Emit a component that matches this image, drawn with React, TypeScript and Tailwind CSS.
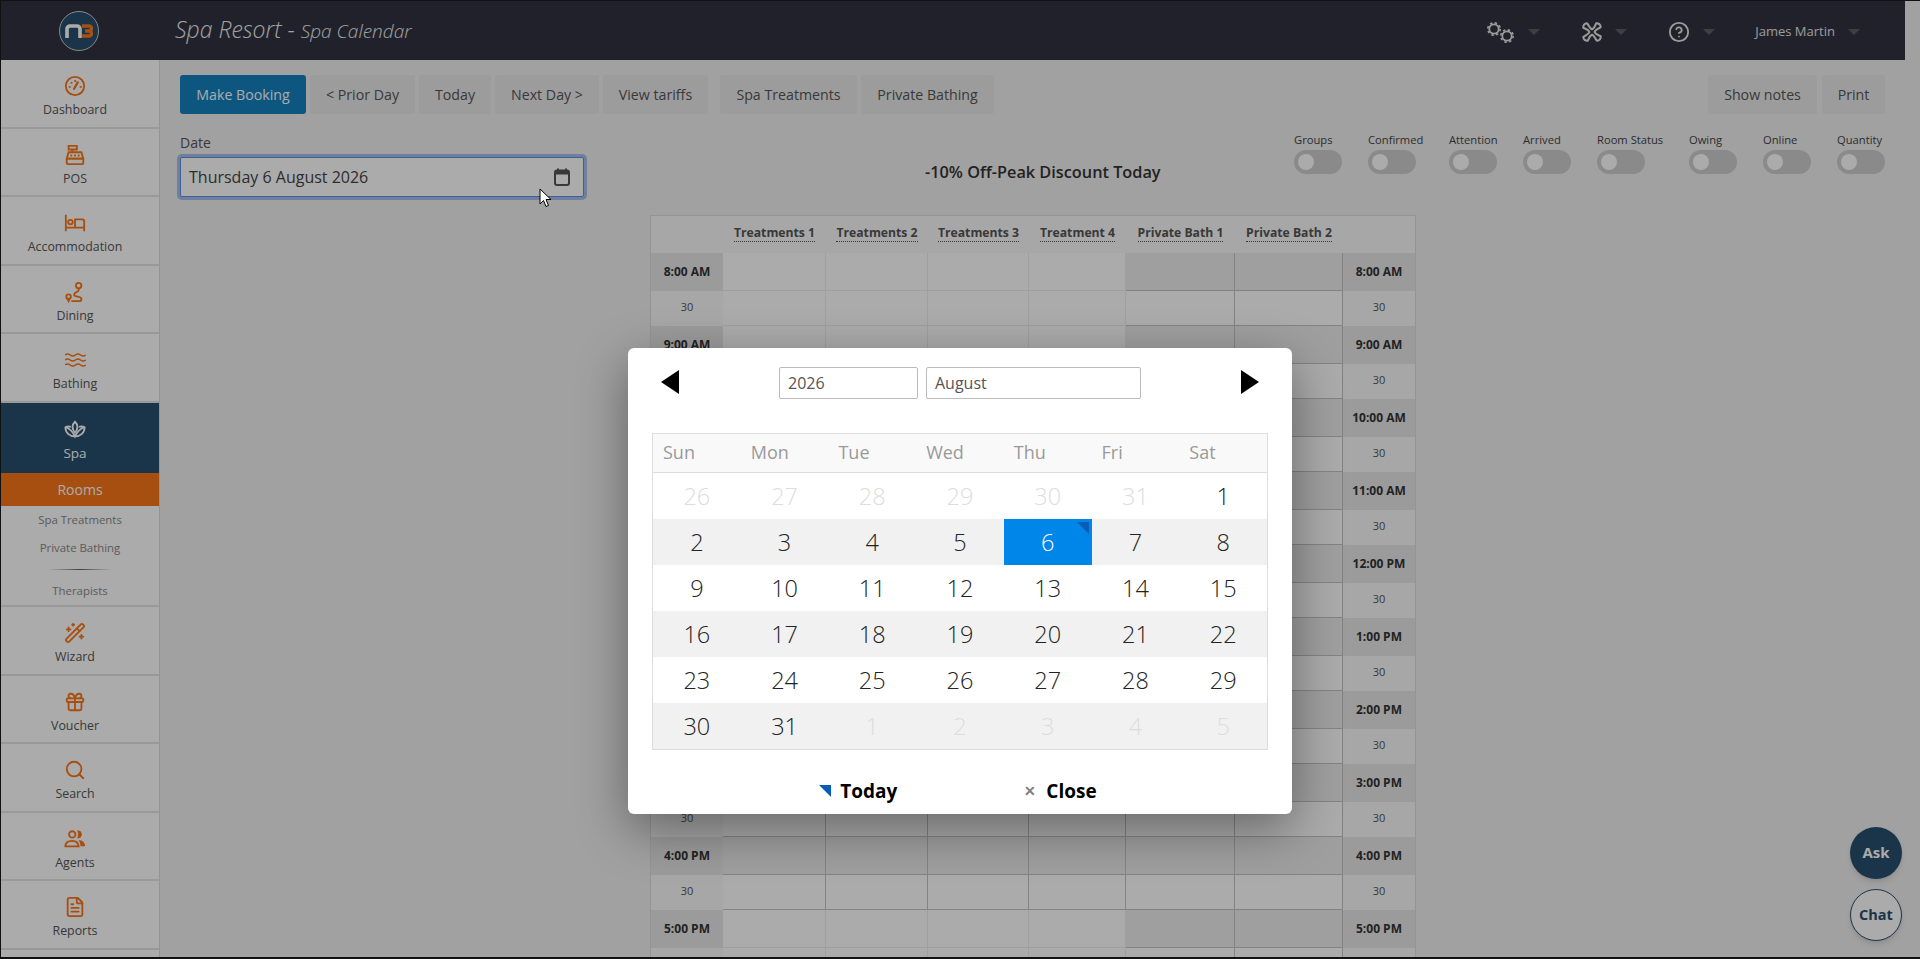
import React from 'react'
import { WandSparkles, Gift, Search, FileText, CircleHelp } from 'lucide-react'

const iconCls = 'w-[22px] h-[22px] text-[#f87718]'

const GaugeIcon = () => (
  <svg viewBox="0 0 24 24" fill="none" stroke="currentColor" strokeWidth="2" strokeLinecap="round" className={iconCls}>
    <circle cx="12" cy="12" r="10" />
    <path d="M11 15l4-7" strokeWidth="2.500" />
    <path d="M6 13h.5M8 8.500h.5M12 6.500h.5M18 13h.5" />
  </svg>
)

const RegisterIcon = () => (
  <svg viewBox="0 0 24 24" fill="none" stroke="currentColor" strokeWidth="2" className={iconCls}>
    <path d="M5 2h9v4H5zM9 6v3" />
    <path d="M5 9h14l2 7H3z" />
    <rect x="3" y="16" width="18" height="6" rx="1" />
    <path d="M7 12.500h2M11 12.500h2M15 12.500h2" />
  </svg>
)

const BedIcon = () => (
  <svg viewBox="0 0 24 24" fill="none" stroke="currentColor" strokeWidth="2" className="w-[24px] h-[22px] text-[#f87718]">
    <path d="M2 3v18M2 17h20M22 21V10a2 2 0 0 0-2-2h-8v9" />
    <circle cx="7" cy="11" r="2.500" />
  </svg>
)

const DiningIcon = () => (
  <svg viewBox="0 0 24 24" fill="none" stroke="currentColor" strokeWidth="2" className={iconCls}>
    <circle cx="16" cy="5" r="3" />
    <path d="M16 8v2c0 2-5 2-5 5 0 3 8 1 8 4.500 0 1.500-1 2.500-2.500 2.500H8" />
    <circle cx="5" cy="17" r="2.500" />
    <path d="M3.500 19l1.500 3 1.500-3" />
  </svg>
)

const WavesIcon = () => (
  <svg viewBox="0 0 21 14" fill="none" stroke="currentColor" strokeWidth="1.500" className="w-[21px] h-[14px] my-[4px] text-[#f87718]">
    <path d="M0 2q2.600-2 5.200 0t5.200 0 5.200 0 5.200 0" />
    <path d="M0 7q2.600-2 5.200 0t5.200 0 5.200 0 5.200 0" />
    <path d="M0 12q2.600-2 5.200 0t5.200 0 5.200 0 5.200 0" />
  </svg>
)

const LotusIcon = () => (
  <svg viewBox="0 0 24 24" fill="none" stroke="currentColor" strokeWidth="2" className="w-[22px] h-[22px] text-white">
    <path d="M12 3c-3 3-4 7 0 12 4-5 3-9 0-12z" />
    <path d="M7.500 8.500C5.500 8 3.500 8 1.500 9c0 6 4.500 10 10.500 10s10.500-4 10.500-10c-2-1-4-1-6-.5" />
    <path d="M2 9c3 1 7 4 10 10 3-6 7-9 10-10" />
  </svg>
)

const AgentsIcon = () => (
  <svg viewBox="0 0 24 24" className={iconCls}>
    <g fill="none" stroke="currentColor" strokeWidth="2">
      <circle cx="9" cy="7" r="3.500" />
      <path d="M1.500 20c0-4 3-6 7.500-6s6.500 2 7 6z" />
    </g>
    <path d="M15 3a4 4 0 0 1 0 8c1-2 1-6 0-8z" fill="currentColor" stroke="currentColor" />
    <path d="M16 13c4 0 7 3 7 7h-5c0-3-1-5-2-7z" fill="currentColor" />
  </svg>
)

const GearsIcon = () => (
  <svg viewBox="0 0 30 24" fill="none" stroke="currentColor" className="w-[30px] h-[24px] text-[#e8e8e8]">
    <circle cx="8" cy="9" r="4.700" strokeWidth="1.800" />
    <circle cx="8" cy="9" r="6.200" strokeWidth="1.600" strokeDasharray="2.400 2.470" />
    <circle cx="21" cy="16" r="4.700" strokeWidth="1.800" />
    <circle cx="21" cy="16" r="6.200" strokeWidth="1.600" strokeDasharray="2.400 2.470" />
  </svg>
)

const PinwheelIcon = () => (
  <svg viewBox="0 0 24 24" fill="none" stroke="currentColor" strokeWidth="2.200" strokeLinejoin="round" className="w-[22px] h-[22px] text-[#e8e8e8]">
    {[0, 90, 180, 270].map((deg) => (
      <path key={deg} transform={`rotate(${deg} 12 12)`} d="M12 9.500C9 7.500 8.500 4.500 6.500 2.500 4 2.500 2 5 2.500 7.500 5 8.500 7.500 9 9.500 12" />
    ))}
  </svg>
)

const Caret = () => (
  <span className="w-0 h-0 border-l-[6px] border-r-[6px] border-t-[6px] border-l-transparent border-r-transparent border-t-[#5a6060]"></span>
)

type NavItem = { label: string; icon: React.ReactElement }

const navTop: NavItem[] = [
  { label: 'Dashboard', icon: <GaugeIcon /> },
  { label: 'POS', icon: <RegisterIcon /> },
  { label: 'Accommodation', icon: <BedIcon /> },
  { label: 'Dining', icon: <DiningIcon /> },
  { label: 'Bathing', icon: <WavesIcon /> },
]

const navBottom: NavItem[] = [
  { label: 'Wizard', icon: <WandSparkles className={iconCls} strokeWidth={2} /> },
  { label: 'Voucher', icon: <Gift className={iconCls} strokeWidth={2} /> },
  { label: 'Search', icon: <Search className={iconCls} strokeWidth={2} /> },
  { label: 'Agents', icon: <AgentsIcon /> },
  { label: 'Reports', icon: <FileText className={iconCls} strokeWidth={2} /> },
]

const NavLink = ({ item }: { item: NavItem }) => (
  <div className="h-[68.600px] shrink-0 flex flex-col items-center pt-[15px] pr-[10px] gap-[4px] border-b-2 border-[#e5e5e5] text-[12.400px] leading-[18px] text-[#555]">
    {item.icon}
    <span>{item.label}</span>
  </div>
)

const toolbarLeft = [
  { label: '< Prior Day', cls: 'w-[105px] ml-[4px]' },
  { label: 'Today', cls: 'w-[72px] ml-[4px]' },
  { label: 'Next Day >', cls: 'w-[104px] ml-[4px]' },
  { label: 'View tariffs', cls: 'w-[105px] ml-[4px]' },
  { label: 'Spa Treatments', cls: 'w-[137px] ml-[12px]' },
  { label: 'Private Bathing', cls: 'w-[133px] ml-[4px]' },
]

const toggles = [
  { label: 'Groups', cls: 'w-[48px]' },
  { label: 'Confirmed', cls: 'w-[55px]' },
  { label: 'Attention', cls: 'w-[48px]' },
  { label: 'Arrived', cls: 'w-[48px]' },
  { label: 'Room Status', cls: 'w-[66px]' },
  { label: 'Owing', cls: 'w-[48px]' },
  { label: 'Online', cls: 'w-[48px]' },
  { label: 'Quantity', cls: 'w-[48px]' },
]

const columns = ['Treatments 1', 'Treatments 2', 'Treatments 3', 'Treatment 4', 'Private Bath 1', 'Private Bath 2']

const hours = ['8:00 AM', '9:00 AM', '10:00 AM', '11:00 AM', '12:00 PM', '1:00 PM', '2:00 PM', '3:00 PM', '4:00 PM', '5:00 PM']

const weekNames = ['Sun', 'Mon', 'Tue', 'Wed', 'Thu', 'Fri', 'Sat']

const weeks: [number, boolean][][] = [
  [[26, true], [27, true], [28, true], [29, true], [30, true], [31, true], [1, false]],
  [[2, false], [3, false], [4, false], [5, false], [6, false], [7, false], [8, false]],
  [[9, false], [10, false], [11, false], [12, false], [13, false], [14, false], [15, false]],
  [[16, false], [17, false], [18, false], [19, false], [20, false], [21, false], [22, false]],
  [[23, false], [24, false], [25, false], [26, false], [27, false], [28, false], [29, false]],
  [[30, false], [31, false], [1, true], [2, true], [3, true], [4, true], [5, true]],
]

const rowGrid = 'grid grid-cols-[72px_103px_102px_101px_97px_109px_108px_72px]'

function ScheduleRow({ hour, index }: { hour: string; index: number }) {
  // treatments columns are only "closed looking" from 3:30 to 4:30
  const closed = index === 8
  const halfClosed = index === 7 || index === 8
  const half = index < 9 ? '30' : ''
  return (
    <>
      <div className={`${rowGrid} h-[38px]`}>
        <div className="flex items-center justify-center bg-[#e8e8e8] text-[12px] font-bold text-[#333]">{hour}</div>
        {columns.map((c, i) => (
          <div
            key={c}
            className={i > 3 || closed
              ? 'bg-[#eeeeee] border-r border-b border-[#c4c4c4]'
              : 'bg-white border-r border-b border-[#eeeeee]'}
          ></div>
        ))}
        <div className="flex items-center justify-center bg-[#e8e8e8] text-[12px] font-bold text-[#333]">{hour}</div>
      </div>
      <div className={`${rowGrid} h-[35px]`}>
        <div className="flex items-center justify-center pb-[2px] text-[11px] text-[#555]">{half}</div>
        {columns.map((c, i) => (
          <div
            key={c}
            className={i > 3 || halfClosed
              ? 'bg-white border-r border-b border-[#c4c4c4]'
              : 'bg-white border-r border-b border-[#eeeeee]'}
          ></div>
        ))}
        <div className="flex items-center justify-center pb-[2px] text-[11px] text-[#555]">{half}</div>
      </div>
    </>
  )
}

export default function App() {
  return (
    <div className="relative w-[1920px] h-[959px] overflow-hidden bg-[#f0f0f0] border-l border-t border-b-2 border-[#111] font-['Open_Sans',sans-serif]">
      {/* Page under the dim */}
      <div className="flex flex-col h-full pr-[15px]">
        <header className="h-[59px] shrink-0 bg-[#30323f] flex items-center text-[#e6e6e6]">
          <div className="w-[155px] flex justify-center">
            <div className="w-[40px] h-[40px] rounded-full bg-[#284f6d] border border-[#cccccc] flex items-center justify-center">
              <svg viewBox="0 0 28 14" className="w-[28px] h-[14px]" fill="none" strokeWidth="3.600">
                <path d="M2 14V5a3 3 0 0 1 3-3h7a3 3 0 0 1 3 3v9" stroke="#ffffff" />
                <path d="M17 2h7a2.250 2.250 0 0 1 0 5h-4 4a2.500 2.500 0 0 1 0 5h-7" stroke="#f87718" />
              </svg>
            </div>
          </div>
          <div className="ml-[19px] -mt-[2px] italic font-light text-[#f2f2f2] whitespace-nowrap">
            <span className="text-[23px]">Spa Resort - </span>
            <span className="text-[19px]">Spa Calendar</span>
          </div>
          <div className="ml-auto mt-[3px] flex items-center mr-[45px]">
            <GearsIcon />
            <span className="ml-[12px] mr-[41px] flex"><Caret /></span>
            <PinwheelIcon />
            <span className="ml-[12px] mr-[41px] flex"><Caret /></span>
            <CircleHelp className="w-[22px] h-[22px] text-[#e8e8e8]" />
            <span className="ml-[13px] mr-[40px] flex"><Caret /></span>
            <span className="text-[13px] text-[#e6e6e6]">James Martin</span>
            <span className="ml-[13px] flex"><Caret /></span>
          </div>
        </header>

        <div className="flex flex-1 min-h-0">
          <aside className="w-[159px] shrink-0 bg-white border-r border-[#dddddd] flex flex-col overflow-hidden">
            {navTop.map((item) => <NavLink key={item.label} item={item} />)}
            <div className="h-[70px] shrink-0 bg-[#284f6d] flex flex-col items-center pt-[16px] pr-[10px] gap-[3px] text-[13.500px] leading-[18px] text-white">
              <LotusIcon />
              <span>Spa</span>
            </div>
            <div className="h-[33px] shrink-0 bg-[#f87718] flex items-center justify-center text-[14px] text-white">Rooms</div>
            <div className="h-[101px] shrink-0 flex flex-col items-center border-b-2 border-[#e5e5e5] text-[11.400px] text-[#888]">
              <span className="leading-[28px]">Spa Treatments</span>
              <span className="leading-[28px]">Private Bathing</span>
              <span className="w-[64px] h-px shrink-0 my-[7px] bg-gradient-to-r from-transparent via-[#666] to-transparent"></span>
              <span className="leading-[28px]">Therapists</span>
            </div>
            {navBottom.map((item) => <NavLink key={item.label} item={item} />)}
          </aside>

          <main className="flex-1 min-w-0 px-[20px] pt-[15px]">
            <div className="flex text-[14.200px] text-[#555] h-[39px]">
              <div className="flex">
                <button className="w-[126px] rounded-[3px] bg-[#1480bf] text-white">Make Booking</button>
                {toolbarLeft.map((b) => (
                  <button key={b.label} className={`${b.cls} rounded-[3px] bg-[#e9e9e9]`}>{b.label}</button>
                ))}
              </div>
              <div className="ml-auto flex">
                <button className="w-[109px] rounded-[3px] bg-[#e9e9e9]">Show notes</button>
                <button className="w-[63px] ml-[5px] rounded-[3px] bg-[#e9e9e9]">Print</button>
              </div>
            </div>

            <div className="flex mt-[19px]">
              <div className="w-[404px]">
                <div className="text-[14px] leading-[20px] text-[#555]">Date</div>
                <div className="mt-[4px] h-[40px] flex items-center justify-between px-[8px] bg-white border border-[#5b8fe8] rounded-[2px] shadow-[0_0_0_3px_rgba(110,150,225,0.55)]">
                  <span className="text-[16px] text-[#444]">Thursday 6 August 2026</span>
                  <svg viewBox="0 0 16 18" className="w-[16px] h-[18px] mr-[5px]">
                    <path d="M4 0.500v3M12 0.500v3" stroke="#555" strokeWidth="2" />
                    <rect x="1" y="2.500" width="14" height="14.500" rx="2" fill="none" stroke="#555" strokeWidth="2" />
                    <rect x="1" y="2.500" width="14" height="4" fill="#555" />
                  </svg>
                </div>
              </div>
              <div className="ml-[341px] mt-[28px] text-[16.300px] leading-[22px] font-semibold text-[#333] whitespace-nowrap">-10% Off-Peak Discount Today</div>
              <div className="ml-auto flex gap-[26px] -mt-[1px]">
                {toggles.map((t) => (
                  <div key={t.label} className={`flex flex-col ${t.cls}`}>
                    <span className="text-[11.200px] leading-[16px] text-[#444] mb-[2px] whitespace-nowrap">{t.label}</span>
                    <span className="w-[48px] h-[24px] rounded-full bg-[#cecece] flex items-center pl-[4px]">
                      <span className="w-[16px] h-[16px] rounded-full bg-white"></span>
                    </span>
                  </div>
                ))}
              </div>
            </div>

            <div className="ml-[470px] mt-[18px] w-[766px] border border-[#dddddd] bg-[#f9f9f9]">
              <div className={`${rowGrid} h-[37px] items-center`}>
                <div></div>
                {columns.map((c) => (
                  <div key={c} className="flex justify-center pb-[3px]">
                    <span className="text-[12.200px] leading-[16px] font-bold text-[#555] border-b border-dotted border-[#555]">{c}</span>
                  </div>
                ))}
                <div></div>
              </div>
              {hours.map((h, i) => <ScheduleRow key={h} hour={h} index={i} />)}
            </div>
          </main>
        </div>
      </div>

      <div className="absolute left-[1849px] top-[826px] w-[52px] h-[52px] rounded-full bg-[#284f6d] flex items-center justify-center pb-[2px] text-[15px] font-bold text-white shadow-md">Ask</div>
      <div className="absolute left-[1849px] top-[888px] w-[52px] h-[52px] rounded-full bg-white border border-[#284f6d] flex items-center justify-center text-[14.500px] font-bold text-[#284f6d] shadow-md">Chat</div>

      {/* Dim */}
      <div className="absolute inset-0 bg-black/33"></div>

      {/* Date picker */}
      <div className="absolute left-[627px] top-[347px] w-[664px] h-[466px] rounded-[6px] bg-white shadow-[0_15px_50px_rgba(0,0,0,0.4)] px-[24px] pt-[19px]">
        <div className="h-[32px] flex items-center justify-between px-[9px]">
          <svg viewBox="0 0 18 24" className="w-[18px] h-[24px] -mt-[2px]"><polygon points="18,0 18,24 0,12" fill="#000" /></svg>
          <div className="flex gap-[8px] text-[16px] text-[#555]">
            <div className="w-[139px] h-[32px] flex items-center px-[8px] border border-[#bbbbbb] rounded-[2px]">2026</div>
            <div className="w-[215px] h-[32px] flex items-center px-[8px] border border-[#bbbbbb] rounded-[2px]">August</div>
          </div>
          <svg viewBox="0 0 18 24" className="w-[18px] h-[24px] -mt-[2px]"><polygon points="0,0 18,12 0,24" fill="#000" /></svg>
        </div>

        <div className="mt-[34px] border border-[#dddddd]">
          <div className="grid grid-cols-7 h-[39px] items-center pb-[2px] bg-[#f9f9f9] border-b border-[#dddddd] text-[18px] text-[#999]">
            {weekNames.map((d) => <span key={d} className="pl-[10px]">{d}</span>)}
          </div>
          {weeks.map((week, w) => (
            <div key={w} className={`grid grid-cols-7 h-[46px] ${w % 2 === 1 ? 'bg-[#f1f1f1]' : 'bg-white'}`}>
              {week.map(([day, muted]) => {
                const selected = w === 1 && day === 6
                return (
                  <div
                    key={`${w}-${day}`}
                    className={`relative flex items-center justify-center pt-[1px] text-[23.500px] font-light ${selected ? 'bg-[#0085e9] text-white' : muted ? 'text-[#dddddd]' : 'text-[#222]'}`}
                  >
                    {day}
                    {selected && (
                      <svg viewBox="0 0 12 12" className="absolute top-[3px] right-[3px] w-[12px] h-[12px]">
                        <polygon points="0,0 12,0 12,12" fill="#0a5cb8" />
                      </svg>
                    )}
                  </div>
                )
              })}
            </div>
          ))}
        </div>

        <div className="mt-[28px] flex justify-center gap-[127px] text-[19px] leading-[26px] font-bold text-black pr-[4px]">
          <div className="flex items-center gap-[9px]">
            <svg viewBox="0 0 12 12" className="w-[12px] h-[12px]"><polygon points="0,0 12,0 12,12" fill="#0a5cb8" /></svg>
            <span>Today</span>
          </div>
          <div className="flex items-center gap-[10px]">
            <span className="text-[14px] text-[#808080]">✕</span>
            <span>Close</span>
          </div>
        </div>
      </div>

      {/* Mouse pointer */}
      <svg viewBox="0 0 12 20" className="absolute left-[538px] top-[187px] w-[12px] h-[20px]">
        <path d="M1 1v15l3.500-3.500 2.500 6 2.500-1-2.500-6h5z" fill="#fff" stroke="#000" strokeWidth="1" />
      </svg>
    </div>
  )
}
